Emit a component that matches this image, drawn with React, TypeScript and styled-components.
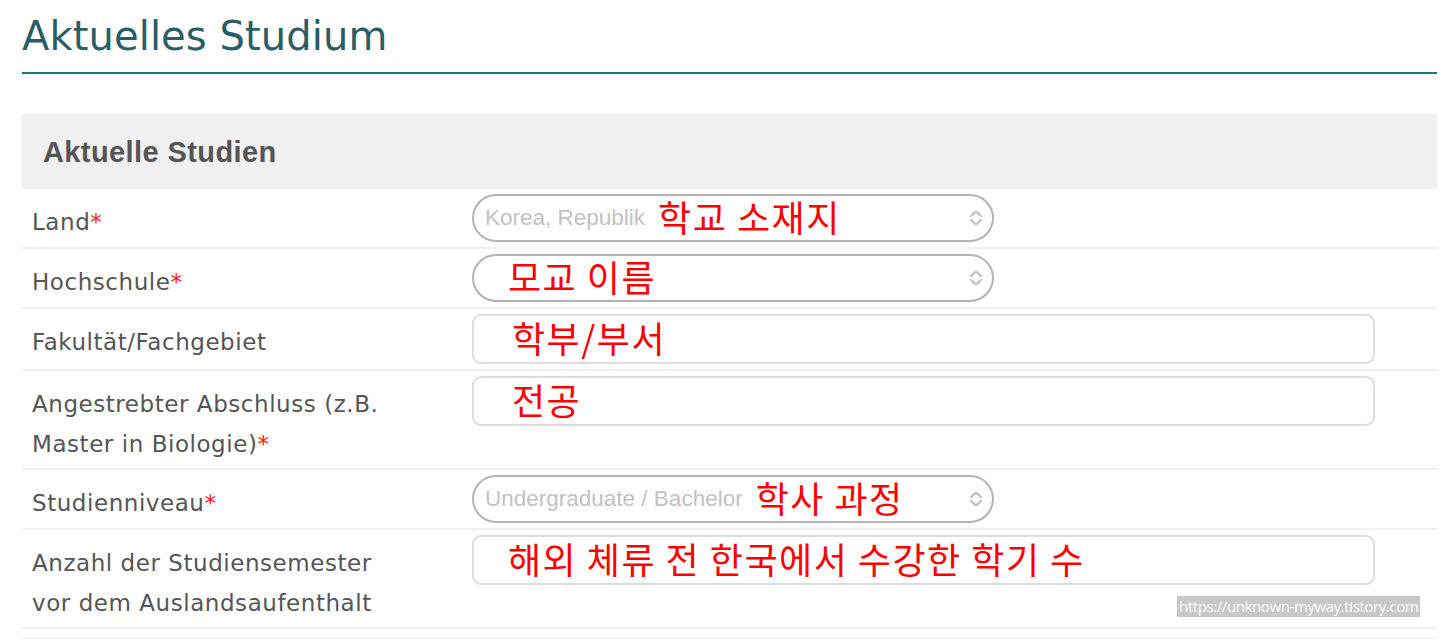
import styled, { createGlobalStyle } from "styled-components";

const GlobalStyle = createGlobalStyle`
  html, body {
    margin: 0;
    padding: 0;
    background: #ffffff;
  }
  body {
    font-family: "DejaVu Sans", Verdana, sans-serif;
  }
`;

type Field = {
  label: string;
  required?: boolean;
  kind: "select" | "input";
  placeholder?: string;
  note: string;
  noteOffset?: number;
};

const fields: Field[] = [
  { label: "Land", required: true, kind: "select", placeholder: "Korea, Republik", note: "학교 소재지" },
  { label: "Hochschule", required: true, kind: "select", note: "모교 이름", noteOffset: 23 },
  { label: "Fakultät/Fachgebiet", kind: "input", note: "학부/부서", noteOffset: 26 },
  {
    label: "Angestrebter Abschluss (z.B. Master in Biologie)",
    required: true,
    kind: "input",
    note: "전공",
    noteOffset: 26,
  },
  {
    label: "Studienniveau",
    required: true,
    kind: "select",
    placeholder: "Undergraduate / Bachelor",
    note: "학사 과정",
  },
  {
    label: "Anzahl der Studiensemester vor dem Auslandsaufenthalt",
    kind: "input",
    note: "해외 체류 전 한국에서 수강한 학기 수",
    noteOffset: 22,
  },
];

export default function App() {
  return (
    <Page>
      <GlobalStyle />
      <PageTitle>Aktuelles Studium</PageTitle>

      <Panel>
        <PanelTitle>Aktuelle Studien</PanelTitle>
      </Panel>

      <FieldList>
        {fields.map((f) => (
          <Row key={f.label}>
            <Label>
              {f.label}
              {f.required && <Star>*</Star>}
            </Label>
            <Control>
              {f.kind === "select" ? (
                <SelectBox>
                  {f.placeholder && <Placeholder>{f.placeholder}</Placeholder>}
                  <Note $offset={f.noteOffset ?? 0}>{f.note}</Note>
                  <Chevron viewBox="0 0 18 18" aria-hidden>
                    <path d="M4 7 L9 2.5 L14 7" />
                    <path d="M4 11 L9 15.5 L14 11" />
                  </Chevron>
                </SelectBox>
              ) : (
                <InputBox>
                  <Note $offset={f.noteOffset ?? 0}>{f.note}</Note>
                </InputBox>
              )}
            </Control>
          </Row>
        ))}
      </FieldList>
      <NextRow />

      <Watermark>https://unknown-myway.tistory.com</Watermark>
    </Page>
  );
}

const Page = styled.div`
  position: relative;
  width: 1415px;
  padding: 0 0 0 22px;
  height: 639px;
  overflow: hidden;
`;

const PageTitle = styled.h1`
  margin: 0;
  padding-top: 13px;
  padding-bottom: 13px;
  font-family: "DejaVu Sans", Verdana, sans-serif;
  font-weight: normal;
  font-size: 40px;
  line-height: 46px;
  letter-spacing: 0.1px;
  color: #2b5d66;
  border-bottom: 2px solid #18778a;
`;

const Panel = styled.div`
  margin-top: 40px;
  height: 75px;
  background: #f0f0f0;
  display: flex;
  align-items: center;
  padding-left: 21px;
`;

const PanelTitle = styled.h2`
  margin: 0;
  font-family: "Liberation Sans", Arial, sans-serif;
  font-weight: bold;
  font-size: 29px;
  letter-spacing: 0.4px;
  color: #555555;
  padding-top: 1px;
`;

const FieldList = styled.div`
  display: flex;
  flex-direction: column;
`;

const Row = styled.div`
  display: grid;
  grid-template-columns: 450px 1fr;
  padding: 5px 0 5px;
  border-bottom: 2px solid #f0f0f0;
  align-items: start;
`;

const Label = styled.div`
  padding: 8px 80px 0 10px;
  margin-bottom: -1px;
  font-family: "DejaVu Sans", Verdana, sans-serif;
  font-size: 23px;
  letter-spacing: 0.55px;
  line-height: 40px;
  color: #555555;
`;

const Star = styled.span`
  color: #ff1a1a;
`;

const Control = styled.div`
  display: flex;
`;

const SelectBox = styled.div`
  position: relative;
  box-sizing: border-box;
  width: 522px;
  height: 48px;
  border: 2px solid #b3b3b3;
  border-radius: 24px;
  display: flex;
  align-items: center;
  padding: 0 40px 0 11px;
  background: #ffffff;
`;

const InputBox = styled.div`
  box-sizing: border-box;
  width: 903px;
  height: 50px;
  border: 2px solid #dddddd;
  border-radius: 9px;
  display: flex;
  align-items: center;
  padding: 0 12px;
  background: #ffffff;
`;

const Placeholder = styled.span`
  font-family: "Liberation Sans", Arial, sans-serif;
  font-size: 22.5px;
  color: #c2c2c2;
  margin-right: 13px;
  white-space: nowrap;
`;

const Note = styled.span<{ $offset: number }>`
  margin-left: ${(p) => p.$offset}px;
  font-family: "Noto Sans CJK KR", "Noto Sans", sans-serif;
  font-weight: 400;
  font-size: 36px;
  letter-spacing: 1.5px;
  line-height: 40px;
  color: #ff0000;
  white-space: nowrap;
  position: relative;
  top: -2px;
`;

const Chevron = styled.svg`
  position: absolute;
  right: 7px;
  top: 50%;
  margin-top: -9px;
  width: 18px;
  height: 18px;
  fill: none;
  stroke: #bdbdbd;
  stroke-width: 2;
  stroke-linecap: round;
  stroke-linejoin: round;
`;

const NextRow = styled.div`
  margin-top: 9px;
  border-top: 2px solid #f0f0f0;
`;

const Watermark = styled.div`
  position: absolute;
  left: 1177px;
  top: 596px;
  height: 21px;
  padding: 0 2px;
  background: #c8c8c8;
  color: #ffffff;
  font-family: "Open Sans", "Liberation Sans", sans-serif;
  font-size: 15px;
  line-height: 21px;
  letter-spacing: -0.4px;
`;
